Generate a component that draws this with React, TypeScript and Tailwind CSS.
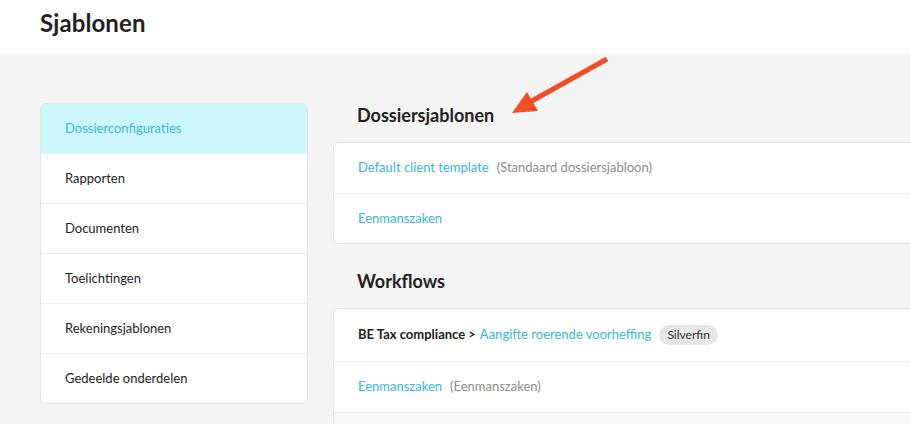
import React from "react";

const font = { fontFamily: "Lato, 'Open Sans', sans-serif" };

const navItems = [
  "Dossierconfiguraties",
  "Rapporten",
  "Documenten",
  "Toelichtingen",
  "Rekeningsjablonen",
  "Gedeelde onderdelen",
];

export default function App() {
  return (
    <div className="relative w-[910px] h-[424px] overflow-hidden bg-[#f4f4f4]" style={font}>
      <header className="h-[54px] bg-white flex items-start pt-[9px] px-10">
        <h1 className="text-[24px] font-bold text-[#222] leading-[28px] tracking-[0.1px]">Sjablonen</h1>
      </header>
      <main className="flex pl-10 pt-[49px] gap-[25px]">
        <nav className="w-[268px] shrink-0 bg-white rounded-[6px] border border-[#e3e3e3] overflow-hidden self-start">
          {navItems.map((item, i) => (
            <div
              key={item}
              className={
                i === 0
                  ? "h-[50px] flex items-center pl-6 bg-[#ccf8fc] text-[13px] text-[#3ab5d8]"
                  : i === navItems.length - 1
                  ? "h-[49px] flex items-center pl-6 text-[13px] text-[#222]"
                  : "h-[50px] flex items-center pl-6 border-b border-[#ededed] text-[13px] text-[#222]"
              }
            >
              {item}
            </div>
          ))}
        </nav>
        <section className="w-[620px] shrink-0">
          <h2 className="h-[24px] flex items-center pl-6 mb-4 text-[18px] font-bold text-[#222]">
            Dossiersjablonen
          </h2>
          <div className="bg-white rounded-[6px] border border-[#e3e3e3] -mt-px">
            <div className="h-[50px] flex items-center pl-6 gap-2 text-[13px]">
              <span className="text-[#3ab5d8]">Default client template</span>
              <span className="text-[#8c8c8c]">(Standaard dossiersjabloon)</span>
            </div>
            <div className="h-[50px] flex items-center pl-6 border-t border-[#ededed] text-[13px] text-[#3ab5d8]">
              Eenmanszaken
            </div>
          </div>
          <h2 className="h-[24px] flex items-center pl-6 mt-[25px] mb-4 text-[18px] font-bold text-[#222]">
            Workflows
          </h2>
          <div className="bg-white rounded-t-[6px] border border-[#e3e3e3] -mt-px">
            <div className="h-[52px] flex items-center pl-6 text-[13px]">
              <span className="font-bold text-[#222]">BE Tax compliance &gt;</span>
              <span className="text-[#3ab5d8] ml-1">Aangifte roerende voorheffing</span>
              <span className="ml-2 h-[20px] px-2 rounded-full bg-[#e6e6e6] text-[12px] text-[#333] flex items-center">
                Silverfin
              </span>
            </div>
            <div className="h-[51px] flex items-center pl-6 gap-2 border-t border-[#ededed] text-[13px]">
              <span className="text-[#3ab5d8]">Eenmanszaken</span>
              <span className="text-[#8c8c8c]">(Eenmanszaken)</span>
            </div>
            <div className="h-[40px] border-t border-[#ededed] bg-[#f8f8f8]" />
          </div>
        </section>
      </main>
      <svg className="absolute left-0 top-0 pointer-events-none" width="910" height="424">
        <line x1="607" y1="59" x2="530" y2="102" stroke="#f24e26" strokeWidth="5" />
        <polygon points="512,113 527,92 538,111" fill="#f24e26" />
      </svg>
    </div>
  );
}
